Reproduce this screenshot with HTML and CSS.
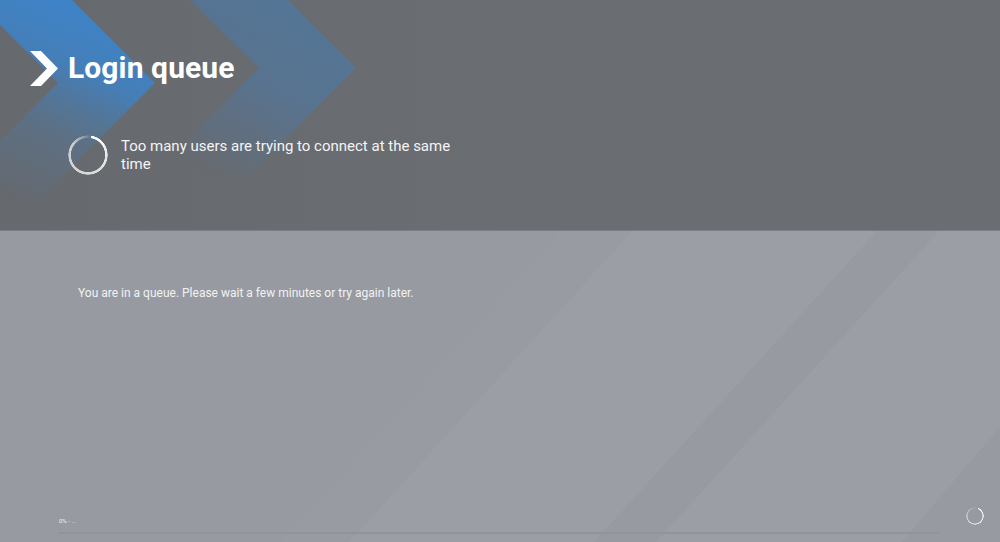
FILE: index.html
```html
<!DOCTYPE html>
<html lang="en">
<head>
<meta charset="utf-8">
<title>Login queue</title>
<link rel="stylesheet" href="styles.css">
</head>
<body>
<div class="screen">
  <header class="header">
    <svg class="deco" width="400" height="230" viewBox="0 0 400 230" aria-hidden="true">
      <defs>
        <linearGradient id="g1" gradientUnits="userSpaceOnUse" x1="110" y1="10" x2="20" y2="215">
          <stop offset="0" stop-color="#3c84cb" stop-opacity="1"/>
          <stop offset="0.3" stop-color="#3f82c4" stop-opacity="0.85"/>
          <stop offset="0.6" stop-color="#4a7cab" stop-opacity="0.35"/>
          <stop offset="0.95" stop-color="#4a7cab" stop-opacity="0"/>
        </linearGradient>
        <linearGradient id="g2" gradientUnits="userSpaceOnUse" x1="300" y1="0" x2="210" y2="175">
          <stop offset="0" stop-color="#3f7fbd" stop-opacity="0.5"/>
          <stop offset="0.45" stop-color="#3f7fbd" stop-opacity="0.4"/>
          <stop offset="1" stop-color="#3f7fbd" stop-opacity="0"/>
        </linearGradient>
      </defs>
      <polygon points="0,0 72,0 155,83 0,238 0,141 58,83 0,25" fill="url(#g1)"/>
      <polygon points="190,0 288,0 356,68 246,178 149,178 259,68" fill="url(#g2)"/>
    </svg>
    <div class="title-row">
      <svg class="title-icon" width="28" height="35" viewBox="0 0 28 35" aria-hidden="true">
        <polygon points="0,0 11,0 28,17.5 11,35 0,35 17,17.5" fill="#ffffff"/>
      </svg>
      <h1 class="title">Login queue</h1>
    </div>
    <div class="status">
      <div class="spinner spinner-lg"></div>
      <p class="status-text">Too many users are trying to connect at the same time</p>
    </div>
  </header>
  <main class="body">
    <svg class="deco" width="1000" height="311" viewBox="0 0 1000 311" aria-hidden="true">
      <polygon points="632,0 877,0 594,311 349,311" fill="#ffffff" fill-opacity="0.045"/>
      <polygon points="939,0 1000,0 1000,196 902,311 656,311" fill="#ffffff" fill-opacity="0.045"/>
      <polygon points="560,0 632,0 349,311 280,311" fill="#ffffff" fill-opacity="0.015"/>
    </svg>
    <p class="message">You are in a queue. Please wait a few minutes or try again later.</p>
    <footer class="footer">
      <div class="progress">
        <span class="progress-label">0% - ...</span>
        <div class="progress-track"></div>
      </div>
      <div class="spinner spinner-sm"></div>
    </footer>
  </main>
</div>
</body>
</html>
```

FILE: styles.css
```css
html, body {
  margin: 0;
  padding: 0;
}

body {
  width: 1000px;
  height: 542px;
  overflow: hidden;
  font-family: Roboto, "Liberation Sans", Arial, sans-serif;
  color: #ffffff;
  background: #989ba2;
}

.screen {
  width: 1000px;
  height: 542px;
  display: flex;
  flex-direction: column;
}

.header {
  position: relative;
  height: 231px;
  box-sizing: border-box;
  padding: 48px 0 0 30px;
  background: linear-gradient(90deg, #66696e 0%, #6a6d72 50%, #6a6d72 100%);
  border-bottom: 1px solid #7b7e83;
  flex: none;
}

.deco {
  position: absolute;
  left: 0;
  top: 0;
  z-index: 0;
}

.title-row {
  position: relative;
  z-index: 1;
  display: flex;
  align-items: center;
  gap: 10px;
  height: 40px;
}

.title-icon {
  display: block;
  flex: none;
}

.title {
  margin: 0;
  font-size: 30px;
  line-height: 40px;
  font-weight: 700;
  letter-spacing: 0.1px;
}

.status {
  position: relative;
  z-index: 1;
  display: flex;
  align-items: center;
  gap: 13px;
  margin: 47px 0 0 38px;
}

.status-text {
  margin: 0;
  width: 345px;
  font-size: 15px;
  line-height: 18px;
  color: #f4f4f4;
}

.spinner {
  border-radius: 50%;
  flex: none;
}

.spinner-lg {
  width: 40px;
  height: 40px;
  background: conic-gradient(from 10deg, #ffffff 0deg, #e6e6e6 90deg, #d6d6d6 200deg, #cccccc 300deg, rgba(210,210,210,0.3) 345deg, rgba(210,210,210,0) 360deg);
  -webkit-mask: radial-gradient(circle, transparent 16.8px, #000 17.4px, #000 19.4px, transparent 20px);
  mask: radial-gradient(circle, transparent 16.8px, #000 17.4px, #000 19.4px, transparent 20px);
}

.body {
  position: relative;
  flex: 1;
  display: flex;
  flex-direction: column;
  background: #979aa1;
}

.message {
  position: relative;
  z-index: 1;
  margin: 54px 0 0 78px;
  font-size: 12px;
  line-height: 16px;
  color: #f2f2f2;
}

.footer {
  position: relative;
  z-index: 1;
  margin-top: auto;
  display: flex;
  align-items: flex-end;
  gap: 27px;
  padding: 0 16px 8px 58px;
}

.progress {
  flex: 1;
  display: flex;
  flex-direction: column;
}

.progress-label {
  font-size: 6px;
  line-height: 8px;
  padding-left: 1px;
  color: #f0f0f0;
}

.progress-track {
  height: 2px;
  margin-top: 7px;
  background: #92949a;
}

.spinner-sm {
  width: 18px;
  height: 18px;
  margin-bottom: 9px;
  background: conic-gradient(from 20deg, #ffffff 0deg, #e6e6e6 120deg, #cccccc 260deg, rgba(200,200,200,0.2) 340deg, rgba(200,200,200,0) 360deg);
  -webkit-mask: radial-gradient(circle, transparent 7.2px, #000 7.8px, #000 8.6px, transparent 9px);
  mask: radial-gradient(circle, transparent 7.2px, #000 7.8px, #000 8.6px, transparent 9px);
}
```
